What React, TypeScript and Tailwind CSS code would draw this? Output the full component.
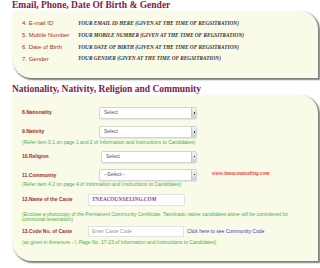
import React from "react";

const serif = "font-['Liberation_Serif',serif]";

function Select({ text, w = "w-[98px]", ml = "ml-0" }: { text: string; w?: string; ml?: string }) {
  return (
    <div className={`${w} ${ml} h-[12px] bg-white border border-[#d4d4d4] rounded-[2px] flex items-stretch shadow-[0_1px_1px_rgba(0,0,0,0.08)]`}>
      <div className="flex-1 flex items-center pl-[4px] text-[5px] text-[#555]">{text}</div>
      <div className="w-[5px] border-l border-[#c8c8c8] bg-gradient-to-b from-[#f4f4f4] to-[#d0d0d0] flex items-center justify-center">
        <div className="w-[1px] h-[1.5px] bg-[#333]" />
      </div>
    </div>
  );
}

function Note({ children, className = "" }: { children: React.ReactNode; className?: string }) {
  return <div className={`text-[5px] leading-[5.5px] text-[#3fb53f] ${className}`}>{children}</div>;
}

const label2 = "text-[5px] font-bold text-[#a02c2a]";

export default function App() {
  const rows1 = [
    ["4. E-mail ID", "YOUR EMAIL ID HERE (GIVEN AT THE TIME OF REGSITRATION)"],
    ["5. Mobile Number", "YOUR MOBILE NUMBER (GIVEN AT THE TIME OF REGSITRATION)"],
    ["6. Date of Birth", "YOUR DATE OF BIRTH (GIVEN AT THE TIME OF REGSITRATION)"],
    ["7. Gender", "YOUR GENDER (GIVEN AT THE TIME OF REGSITRATION)"],
  ];
  return (
    <div className="w-[320px] h-[268px] bg-white overflow-hidden font-['Liberation_Sans',Arial,sans-serif]">
      <div className={`${serif} font-bold text-[9.5px] leading-[10px] text-[#7a2244] pl-[12px]`}>
        Email, Phone, Date Of Birth &amp; Gender
      </div>
      <div className="ml-[12px] mr-[2px] mt-[1px] h-[67px] bg-[#fafae9] rounded-tr-[18px] rounded-bl-[20px] shadow-[1.5px_1.5px_1.5px_rgba(0,0,0,0.5)] pt-[7px] pl-[10px] flex flex-col">
        {rows1.map(([l, v]) => (
          <div key={l} className="h-[11.8px] flex items-center">
            <div className="w-[56px] text-[6px] text-[#a8302c]">{l}</div>
            <div className={`${serif} italic font-bold text-[5.3px] text-[#333]`}>{v}</div>
          </div>
        ))}
      </div>
      <div className={`${serif} font-bold text-[9.5px] leading-[10px] text-[#7a2244] pl-[12px] mt-[6px]`}>
        Nationality, Nativity, Religion and Community
      </div>
      <div className="ml-[12px] mr-[2px] mt-[1px] h-[166px] bg-[#fafae9] rounded-tr-[18px] rounded-bl-[20px] shadow-[1.5px_1.5px_1.5px_rgba(0,0,0,0.5)] pl-[10px] pt-[12px] flex flex-col">
        <div className="flex items-center h-[12px]">
          <div className={`w-[77px] ${label2}`}>8.Nationality</div>
          <Select text="Select" />
        </div>
        <div className="flex items-center h-[12px] mt-[7px]">
          <div className={`w-[77px] ${label2}`}>9.Nativity</div>
          <Select text="Select" />
        </div>
        <Note className="mt-[1.5px]">(Refer item 0.1 on page 1 and 2 of Information and Instructions to Candidates)</Note>
        <div className="flex items-center h-[12px] mt-[5.5px]">
          <div className={`w-[77px] ${label2}`}>10.Religion</div>
          <Select text="Select" w="w-[96px]" ml="ml-[2px]" />
        </div>
        <div className="flex items-center h-[12px] mt-[6px]">
          <div className={`w-[77px] ${label2} pt-[3px]`}>11.Community</div>
          <Select text="--Select--" />
          <div className={`${serif} italic font-bold text-[5.5px] text-[#e8463c] ml-[15px] -mt-[2px]`}>www.tneacounseling.com</div>
        </div>
        <Note className="mt-[1.5px]">(Refer item 4.2 on page 4 of Information and Instructions to Candidates)</Note>
        <div className="flex items-center h-[12px] mt-[6px]">
          <div className={`w-[66px] ${label2}`}>12.Name of the Caste</div>
          <div className="w-[97px] h-[12px] bg-white border border-[#e2e2e2] flex items-center pl-[3px]">
            <span className={`${serif} italic font-bold text-[5.5px] text-[#8c3c90]`}>TNEACOUNSELING.COM</span>
          </div>
        </div>
        <Note className="mt-[6px] pr-[14px]">
          (Enclose a photocopy of the Permanent Community Certificate. Tamilnadu native candidates alone will be considered for communal reservation)
        </Note>
        <div className="flex items-center h-[11px] mt-[3.5px]">
          <div className={`w-[66px] ${label2}`}>13.Code No. of Caste</div>
          <div className="w-[96px] h-[11px] bg-white border border-[#e2e2e2] flex items-center pl-[3px] text-[5px] text-[#999]">
            Enter Caste Code
          </div>
          <div className="ml-[3px] text-[5px] text-[#4040c8]">Click here to see Community Code</div>
        </div>
        <Note className="mt-[2.5px]">(as given in Annexure - I, Page No. 17-23 of Information and Instructions to Candidates)</Note>
      </div>
    </div>
  );
}
